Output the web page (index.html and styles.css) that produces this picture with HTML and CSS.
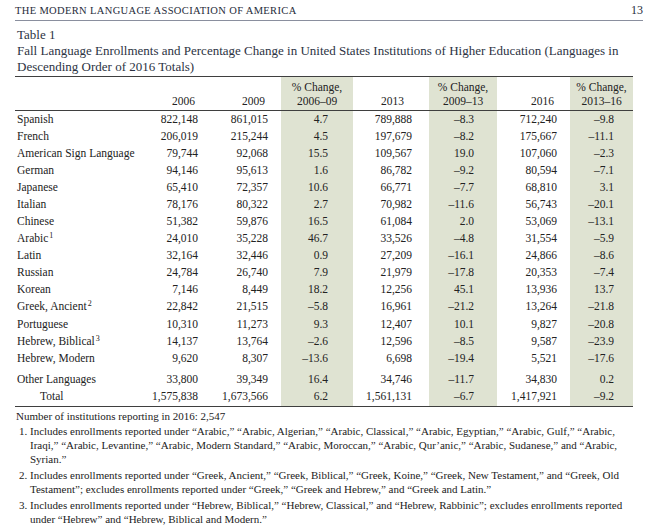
FILE: index.html
```html
<!DOCTYPE html>
<html lang="en">
<head>
    <meta charset="UTF-8">
    <meta name="viewport" content="width=device-width, initial-scale=1.0">
    <title>Table 1 - Fall Language Enrollments</title>
    <link rel="stylesheet" href="styles.css">
</head>
<body>
    <div class="page">
        <div class="running-head">
            <span class="journal">THE MODERN LANGUAGE ASSOCIATION OF AMERICA</span>
            <span class="folio">13</span>
        </div>

        <div class="caption">
            <div>Table 1</div>
            <div>Fall Language Enrollments and Percentage Change in United States Institutions of Higher Education (Languages in<br>Descending Order of 2016 Totals)</div>
        </div>

        <table class="enroll">
            <colgroup>
                <col class="c-lang">
                <col class="c-year">
                <col class="c-year">
                <col class="c-pct1">
                <col class="c-y13">
                <col class="c-pct2">
                <col class="c-y16">
                <col class="c-pct3">
            </colgroup>
            <thead>
                <tr>
                    <th></th>
                    <th class="yr">2006</th>
                    <th class="yr">2009</th>
                    <th class="pct">% Change,<br>2006–09</th>
                    <th class="yr y13">2013</th>
                    <th class="pct">% Change,<br>2009–13</th>
                    <th class="yr">2016</th>
                    <th class="pct">% Change,<br>2013–16</th>
                </tr>
            </thead>
            <tbody>
                <tr><td>Spanish</td><td>822,148</td><td>861,015</td><td class="p1">4.7</td><td class="n13">789,888</td><td class="p2">–8.3</td><td>712,240</td><td class="p3">–9.8</td></tr>
                <tr><td>French</td><td>206,019</td><td>215,244</td><td class="p1">4.5</td><td class="n13">197,679</td><td class="p2">–8.2</td><td>175,667</td><td class="p3">–11.1</td></tr>
                <tr><td>American Sign Language</td><td>79,744</td><td>92,068</td><td class="p1">15.5</td><td class="n13">109,567</td><td class="p2">19.0</td><td>107,060</td><td class="p3">–2.3</td></tr>
                <tr><td>German</td><td>94,146</td><td>95,613</td><td class="p1">1.6</td><td class="n13">86,782</td><td class="p2">–9.2</td><td>80,594</td><td class="p3">–7.1</td></tr>
                <tr><td>Japanese</td><td>65,410</td><td>72,357</td><td class="p1">10.6</td><td class="n13">66,771</td><td class="p2">–7.7</td><td>68,810</td><td class="p3">3.1</td></tr>
                <tr><td>Italian</td><td>78,176</td><td>80,322</td><td class="p1">2.7</td><td class="n13">70,982</td><td class="p2">–11.6</td><td>56,743</td><td class="p3">–20.1</td></tr>
                <tr><td>Chinese</td><td>51,382</td><td>59,876</td><td class="p1">16.5</td><td class="n13">61,084</td><td class="p2">2.0</td><td>53,069</td><td class="p3">–13.1</td></tr>
                <tr><td>Arabic<sup>1</sup></td><td>24,010</td><td>35,228</td><td class="p1">46.7</td><td class="n13">33,526</td><td class="p2">–4.8</td><td>31,554</td><td class="p3">–5.9</td></tr>
                <tr><td>Latin</td><td>32,164</td><td>32,446</td><td class="p1">0.9</td><td class="n13">27,209</td><td class="p2">–16.1</td><td>24,866</td><td class="p3">–8.6</td></tr>
                <tr><td>Russian</td><td>24,784</td><td>26,740</td><td class="p1">7.9</td><td class="n13">21,979</td><td class="p2">–17.8</td><td>20,353</td><td class="p3">–7.4</td></tr>
                <tr><td>Korean</td><td>7,146</td><td>8,449</td><td class="p1">18.2</td><td class="n13">12,256</td><td class="p2">45.1</td><td>13,936</td><td class="p3">13.7</td></tr>
                <tr><td>Greek, Ancient<sup>2</sup></td><td>22,842</td><td>21,515</td><td class="p1">–5.8</td><td class="n13">16,961</td><td class="p2">–21.2</td><td>13,264</td><td class="p3">–21.8</td></tr>
                <tr class="after-gap"><td>Portuguese</td><td>10,310</td><td>11,273</td><td class="p1">9.3</td><td class="n13">12,407</td><td class="p2">10.1</td><td>9,827</td><td class="p3">–20.8</td></tr>
                <tr><td>Hebrew, Biblical<sup>3</sup></td><td>14,137</td><td>13,764</td><td class="p1">–2.6</td><td class="n13">12,596</td><td class="p2">–8.5</td><td>9,587</td><td class="p3">–23.9</td></tr>
                <tr><td>Hebrew, Modern</td><td>9,620</td><td>8,307</td><td class="p1">–13.6</td><td class="n13">6,698</td><td class="p2">–19.4</td><td>5,521</td><td class="p3">–17.6</td></tr>
                <tr class="other"><td>Other Languages</td><td>33,800</td><td>39,349</td><td class="p1">16.4</td><td class="n13">34,746</td><td class="p2">–11.7</td><td>34,830</td><td class="p3">0.2</td></tr>
                <tr class="total"><td>Total</td><td>1,575,838</td><td>1,673,566</td><td class="p1">6.2</td><td class="n13">1,561,131</td><td class="p2">–6.7</td><td>1,417,921</td><td class="p3">–9.2</td></tr>
            </tbody>
        </table>

        <div class="notes">
            <p class="count">Number of institutions reporting in 2016: 2,547</p>
            <div class="note">
                <span class="num">1.</span>
                <span>Includes enrollments reported under “Arabic,” “Arabic, Algerian,” “Arabic, Classical,” “Arabic, Egyptian,” “Arabic, Gulf,” “Arabic,<br>Iraqi,” “Arabic, Levantine,” “Arabic, Modern Standard,” “Arabic, Moroccan,” “Arabic, Qur’anic,” “Arabic, Sudanese,” and “Arabic,<br>Syrian.”</span>
            </div>
            <div class="note">
                <span class="num">2.</span>
                <span>Includes enrollments reported under “Greek, Ancient,” “Greek, Biblical,” “Greek, Koine,” “Greek, New Testament,” and “Greek, Old<br>Testament”; excludes enrollments reported under “Greek,” “Greek and Hebrew,” and “Greek and Latin.”</span>
            </div>
            <div class="note">
                <span class="num">3.</span>
                <span>Includes enrollments reported under “Hebrew, Biblical,” “Hebrew, Classical,” and “Hebrew, Rabbinic”; excludes enrollments reported<br>under “Hebrew” and “Hebrew, Biblical and Modern.”</span>
            </div>
        </div>
    </div>
</body>
</html>
```

FILE: styles.css
```css
* {
    margin: 0;
    padding: 0;
    box-sizing: border-box;
}

body {
    font-family: "Liberation Serif", "Times New Roman", serif;
    background-color: #ffffff;
    color: #222;
}

.page {
    width: 650px;
    padding: 3px 7px 0 15px;
}

/* Running head */
.running-head {
    display: flex;
    justify-content: space-between;
    align-items: baseline;
    line-height: 14px;
    padding-bottom: 2px;
    border-bottom: 1.5px solid #8a8f9e;
    color: #262b3a;
}

.journal {
    font-size: 10.5px;
    letter-spacing: 0.35px;
}

.folio {
    font-size: 12px;
}

/* Caption */
.caption {
    margin-top: 6px;
    padding-left: 2px;
    font-size: 13px;
    line-height: 16px;
    color: #2c3343;
}

/* Table */
.enroll {
    width: 618px;
    margin-top: 1px;
    border-collapse: collapse;
    table-layout: fixed;
    font-size: 11.5px;
    color: #222;
}

.c-lang { width: 125px; }
.c-year { width: 71px; }
.c-year + .c-year { width: 70px; }
.c-pct1 { width: 72px; background-color: #dfe3d2; }
.c-y13 { width: 76px; }
.c-pct2 { width: 68px; background-color: #dfe3d2; }
.c-y16 { width: 73px; }
.c-pct3 { width: 63px; background-color: #dfe3d2; }

.enroll thead tr {
    border-top: 1.5px solid #3f3f3f;
    border-bottom: 1px solid #3f3f3f;
}

.enroll th {
    font-weight: normal;
    line-height: 14px;
    padding: 3px 0 2px;
    vertical-align: bottom;
}

.enroll th.yr {
    text-align: right;
    padding-right: 16px;
}

.enroll th.y13 {
    padding-right: 25px;
}

.enroll th.pct {
    text-align: center;
}

.enroll td {
    line-height: 17px;
    height: 17px;
    text-align: right;
    padding: 0 13px 0 0;
    white-space: nowrap;
}

.enroll td:first-child {
    text-align: left;
    padding: 0 0 0 2px;
}

.enroll td.p1 { padding-right: 25px; }
.enroll td.n13 { padding-right: 17px; }
.enroll td.p2 { padding-right: 23px; }
.enroll td.p3 { padding-right: 19px; }

.enroll sup {
    font-size: 8px;
    line-height: 0;
    vertical-align: 4px;
    margin-left: 1px;
}

.enroll tr.after-gap td {
    padding-top: 1px;
    height: 18px;
}

.enroll tr.other td {
    padding-top: 4px;
    height: 21px;
}

.enroll tr.total {
    border-bottom: 1.5px solid #3f3f3f;
}

.enroll tr.total td {
    height: 18px;
}

.enroll tr.total td:first-child {
    padding-left: 25px;
}

/* Notes */
.notes {
    margin-top: 2px;
    font-size: 11px;
    line-height: 14px;
    color: #222;
    white-space: nowrap;
}

.count {
    padding-left: 1px;
    margin-bottom: 1px;
}

.note {
    display: grid;
    grid-template-columns: 11px 1fr;
    padding-left: 4px;
    margin-bottom: 2px;
}
```
